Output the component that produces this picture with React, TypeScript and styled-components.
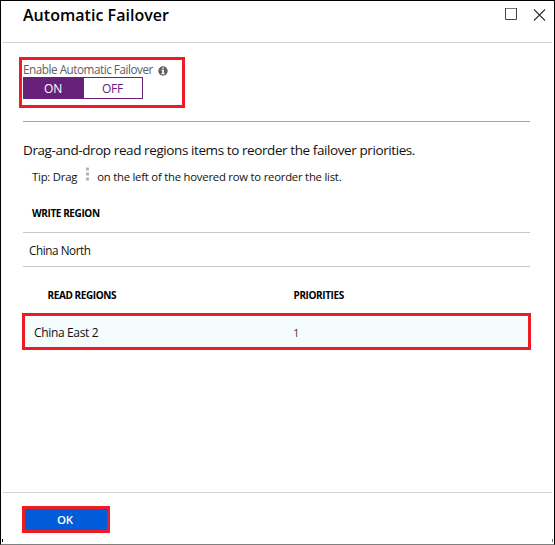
import React from "react";
import styled, { createGlobalStyle } from "styled-components";

const GlobalStyle = createGlobalStyle`
  * { box-sizing: border-box; }
  body { margin: 0; background: #fff; }
  button { font: inherit; }
`;

const Panel = styled.div`
  width: 555px;
  height: 545px;
  display: flex;
  flex-direction: column;
  border: 1px solid #000;
  border-bottom-color: #808080;
  background: #fff;
  color: #111;
  font-family: "Open Sans", "Noto Sans", sans-serif;
  font-size: 12px;
`;

const Header = styled.header`
  height: 42px;
  margin: 0 2px;
  padding: 0 6px 0 20px;
  display: flex;
  justify-content: space-between;
  border-bottom: 1px solid #d2d2d2;
`;

const Title = styled.h1`
  margin: 0;
  font-size: 16px;
  font-weight: 600;
  line-height: 29px;
  white-space: nowrap;
  letter-spacing: 0.03px;
  color: #000;
`;

const WindowControls = styled.div`
  display: flex;
  align-items: flex-start;
  gap: 16px;
  padding-top: 7px;
`;

const Content = styled.main`
  flex: 1;
  display: flex;
  flex-direction: column;
  padding: 14px 24px 0 22px;
`;

const FailoverSetting = styled.section`
  width: 166px;
  height: 51px;
  margin-left: -4px;
  padding: 2px 1px 0;
  border: 3px solid #ed1c24;
`;

const SettingLabel = styled.div`
  display: flex;
  align-items: center;
  height: 15px;
  gap: 5px;
  font-size: 11.7px;
  line-height: 15px;
  letter-spacing: -0.46px;
  white-space: nowrap;
  color: #606060;

  svg {
    margin-top: 2px;
  }
`;

const Toggle = styled.div`
  display: flex;
  width: 120px;
  height: 22px;
  border: 1px solid #68217a;
`;

const ToggleOption = styled.button<{ $active?: boolean }>`
  flex: ${(p) => (p.$active ? "0 0 60px" : "1")};
  padding: 1px ${(p) => (p.$active ? "2px" : "1px")} 0 0;
  border: 0;
  line-height: 19px;
  font-size: 12px;
  letter-spacing: -0.3px;
  background: ${(p) => (p.$active ? "#68217a" : "#fff")};
  color: ${(p) => (p.$active ? "#fff" : "#68217a")};
`;

const Divider = styled.hr`
  width: 100%;
  height: 1px;
  margin: 13px 0 0;
  border: 0;
  background: #a6a6a6;
`;

const Instruction = styled.p`
  margin: 18px 0 0;
  font-size: 13.5px;
  line-height: 20px;
  letter-spacing: -0.41px;
  white-space: nowrap;
`;

const Tip = styled.p`
  display: flex;
  margin: 7px 0 0 9px;
  font-size: 11.3px;
  line-height: 20px;
  letter-spacing: -0.22px;
  white-space: nowrap;
`;

const DragIcon = styled.svg`
  margin: 0 7px 0 8px;
`;

const ColumnTitle = styled.div`
  font-size: 10px;
  font-weight: 700;
  line-height: 20px;
  letter-spacing: -0.4px;
  white-space: nowrap;
  color: #000;
`;

const WriteHeader = styled.div`
  margin-top: 16px;
  padding: 0 0 9px 9px;
  border-bottom: 1px solid #c8c8c8;
`;

const WriteRow = styled.div`
  height: 34px;
  padding-left: 6px;
  border-bottom: 1px solid #c8c8c8;
  font-size: 11.7px;
  line-height: 35px;
  letter-spacing: -0.42px;
`;

const ReadHeader = styled.div`
  display: grid;
  grid-template-columns: 246px 1fr;
  margin-top: 18px;
  padding-left: 24.5px;
`;

const ReadRow = styled.div`
  display: grid;
  grid-template-columns: 259px 1fr;
  height: 37px;
  margin: 8px -1px 0;
  padding-left: 9px;
  border: 3px solid #ed1c24;
  background: #f4fcfe;
  font-size: 12px;
  line-height: 33px;
  letter-spacing: -0.35px;
`;

const Priority = styled.span`
  font-size: 11.5px;
  line-height: 34px;
  color: #444;
`;

const Footer = styled.footer`
  height: 52px;
  margin: 0 1px;
  display: flex;
  flex-direction: column;
  justify-content: space-between;
`;

const FooterActions = styled.div`
  margin: 0 1px;
  padding: 13px 0 0 19px;
  border-top: 1px solid #d2d2d2;
`;

const OkButton = styled.button`
  display: block;
  width: 88px;
  height: 27px;
  padding: 0 2px 0 0;
  border: 3px solid #ed1c24;
  background: #015cda;
  color: #fff;
  font-size: 11.5px;
  font-weight: 600;
  line-height: 21px;
  letter-spacing: -0.2px;
`;

const CornerMarks = styled.div`
  display: flex;
  justify-content: space-between;
  height: 3px;
  margin-bottom: 2px;
`;

const Mark = styled.span<{ $color: string }>`
  width: 1px;
  background: ${(p) => p.$color};
`;

export default function App() {
  return (
    <>
      <GlobalStyle />
      <Panel>
        <Header>
          <Title>Automatic Failover</Title>
          <WindowControls>
            <svg width="12" height="12" viewBox="0 0 12 12">
              <path d="M0.5 0V11.5H11.5V0" fill="none" stroke="#444" />
              <path d="M1 0.5H11" stroke="#777" />
            </svg>
            <svg width="13" height="14" viewBox="0 0 13 14">
              <path d="M1 1.5 12 12.5M12 1.5 1 12.5" stroke="#333" strokeWidth="1.1" />
            </svg>
          </WindowControls>
        </Header>
        <Content>
          <FailoverSetting>
            <SettingLabel>
              <span>Enable Automatic Failover</span>
              <svg width="10" height="10" viewBox="0 0 10 10">
                <circle cx="5" cy="5" r="4.7" fill="#606060" />
                <path d="M4.2 1.5h1.7v1.3H4.2zM3.5 3.8h2.4v3.4h.8v1H3.4v-1h.8V4.8h-.7z" fill="#fff" />
              </svg>
            </SettingLabel>
            <Toggle>
              <ToggleOption $active>ON</ToggleOption>
              <ToggleOption>OFF</ToggleOption>
            </Toggle>
          </FailoverSetting>
          <Divider />
          <Instruction>Drag-and-drop read regions items to reorder the failover priorities.</Instruction>
          <Tip>
            <span>Tip: Drag</span>
            <DragIcon width="5" height="14" viewBox="0 0 5 14">
              <g fill="#a9b0ba">
                <rect x="1" y="0.5" width="3" height="3" rx="0.8" />
                <rect x="1" y="5.5" width="3" height="3" rx="0.8" />
                <rect x="1" y="10.5" width="3" height="3" rx="0.8" />
              </g>
            </DragIcon>
            <span>on the left of the hovered row to reorder the list.</span>
          </Tip>
          <WriteHeader>
            <ColumnTitle>WRITE REGION</ColumnTitle>
          </WriteHeader>
          <WriteRow>China North</WriteRow>
          <ReadHeader>
            <ColumnTitle>READ REGIONS</ColumnTitle>
            <ColumnTitle>PRIORITIES</ColumnTitle>
          </ReadHeader>
          <ReadRow>
            <span>China East 2</span>
            <Priority>1</Priority>
          </ReadRow>
        </Content>
        <Footer>
          <FooterActions>
            <OkButton>OK</OkButton>
          </FooterActions>
          <CornerMarks>
            <Mark $color="#000" />
            <Mark $color="#777" />
          </CornerMarks>
        </Footer>
      </Panel>
    </>
  );
}
